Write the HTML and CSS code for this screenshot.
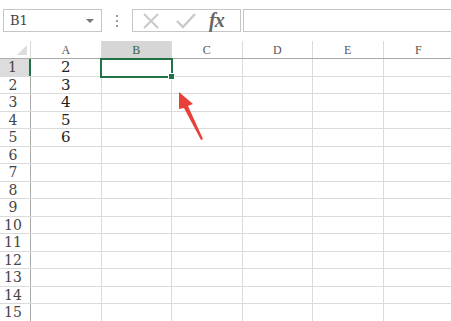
FILE: index.html
```html
<!DOCTYPE html>
<html lang="en">

<head>
  <meta charset="UTF-8">
  <title>Sheet</title>
  <link rel="stylesheet" href="styles.css">
</head>

<body>
  <!-- Name box and formula bar -->
  <div class="toolbar">
    <div class="namebox">
      <span>B1</span>
      <span class="drop"></span>
    </div>
    <div class="grip"><i></i><i></i><i></i></div>
    <div class="fxbox">
      <svg class="btn" width="20" height="20" viewBox="0 0 20 20">
        <path d="M3 3 L17 17 M17 3 L3 17" stroke="#c9c9c9" stroke-width="2" fill="none" />
      </svg>
      <svg class="btn" width="22" height="20" viewBox="0 0 22 20">
        <path d="M2 10 L8 16 L20 3" stroke="#c9c9c9" stroke-width="2.4" fill="none" />
      </svg>
      <span class="fx">fx</span>
    </div>
    <div class="formula"></div>
  </div>

  <!-- Grid -->
  <div class="sheet">
    <div class="row head">
      <div class="rh corner"><span class="tri"></span></div>
      <div class="cell">A</div>
      <div class="cell sel">B</div>
      <div class="cell">C</div>
      <div class="cell">D</div>
      <div class="cell">E</div>
      <div class="cell">F</div>
    </div>
    <div id="rows"></div>

    <div class="cursor"><span class="handle"></span></div>

    <svg class="arrow" width="40" height="60" viewBox="0 0 40 60">
      <polygon points="4,1 18,13 13,15 28,48 26,49 9,17 4,18" fill="#e8413c" />
    </svg>
  </div>

  <script>
    const values = ['2', '3', '4', '5', '6'];
    const rows = document.getElementById('rows');
    for (let i = 1; i <= 15; i++) {
      const row = document.createElement('div');
      row.className = 'row';
      let html = '<div class="rh' + (i === 1 ? ' sel' : '') + '">' + i + '</div>';
      html += '<div class="cell val">' + (values[i - 1] || '') + '</div>';
      for (let c = 0; c < 5; c++) html += '<div class="cell"></div>';
      row.innerHTML = html;
      rows.appendChild(row);
    }
  </script>
</body>

</html>
```

FILE: styles.css
```css
body {
  margin: 0;
  width: 451px;
  height: 321px;
  overflow: hidden;
  background: #fff;
  font-family: "Liberation Serif", "DejaVu Serif", serif;
  color: #333;
}

/* Formula bar row */
.toolbar {
  display: flex;
  align-items: flex-start;
  height: 41px;
  padding-top: 9px;
  box-sizing: border-box;
}

.namebox {
  margin-left: 3px;
  width: 99px;
  height: 23px;
  box-sizing: border-box;
  border: 1px solid #c6c6c6;
  display: flex;
  align-items: center;
  justify-content: space-between;
  padding: 0 7px 0 6px;
  font-family: "DejaVu Serif", serif;
  font-size: 13px;
  color: #444;
}

.drop {
  width: 0;
  height: 0;
  border-left: 4px solid transparent;
  border-right: 4px solid transparent;
  border-top: 4px solid #777;
}

.grip {
  width: 30px;
  height: 23px;
  display: flex;
  flex-direction: column;
  align-items: center;
  justify-content: center;
  gap: 3px;
}

.grip i {
  width: 2px;
  height: 2px;
  background: #9a9a9a;
}

.fxbox {
  width: 109px;
  height: 23px;
  box-sizing: border-box;
  border: 1px solid #c6c6c6;
  display: flex;
  align-items: center;
  padding-left: 8px;
  gap: 14px;
}

.fx {
  font-family: "Liberation Serif", serif;
  font-style: italic;
  font-weight: bold;
  font-size: 20px;
  color: #666;
  margin-left: -2px;
  letter-spacing: -1px;
}

.formula {
  margin-left: 2px;
  flex: 1;
  height: 23px;
  box-sizing: border-box;
  border: 1px solid #c6c6c6;
  border-right: none;
}

/* Grid */
.sheet {
  position: relative;
}

.row {
  display: flex;
  height: 17.5px;
  box-sizing: border-box;
  border-bottom: 1px solid #dadada;
}

.row.head {
  height: 18px;
  border-bottom: 1px solid #ababab;
}

.rh {
  width: 31px;
  flex: none;
  box-sizing: border-box;
  border-right: 1px solid #ababab;
  text-align: center;
  font-family: "DejaVu Serif", serif;
  font-size: 14px;
  line-height: 17px;
  padding-right: 4px;
  color: #444;
}

.rh.sel {
  background: #dcdcdc;
  border-right: 2px solid #217346;
}

.corner {
  position: relative;
  border-right: 1px solid #dadada;
}

.tri {
  position: absolute;
  right: 3px;
  bottom: 3px;
  width: 0;
  height: 0;
  border-left: 10px solid transparent;
  border-bottom: 10px solid #dcdcdc;
}

.cell {
  width: 70.5px;
  flex: none;
  box-sizing: border-box;
  border-right: 1px solid #dadada;
  text-align: center;
  font-size: 13px;
  line-height: 17px;
}

.head .cell {
  color: #555;
  font-size: 12px;
  line-height: 18px;
}

.head .cell.sel {
  background: #d6d6d6;
  color: #2f5f3f;
}

.cell.val {
  font-family: "DejaVu Serif", serif;
  font-size: 15px;
  color: #222;
}

/* Active cell outline and the red pointer */
.cursor {
  position: absolute;
  left: 100px;
  top: 17px;
  width: 73px;
  height: 20px;
  box-sizing: border-box;
  border: 2px solid #217346;
}

.handle {
  position: absolute;
  right: -4px;
  bottom: -4px;
  width: 5px;
  height: 5px;
  background: #217346;
  border: 1px solid #fff;
}

.arrow {
  position: absolute;
  left: 175px;
  top: 50px;
}
```
